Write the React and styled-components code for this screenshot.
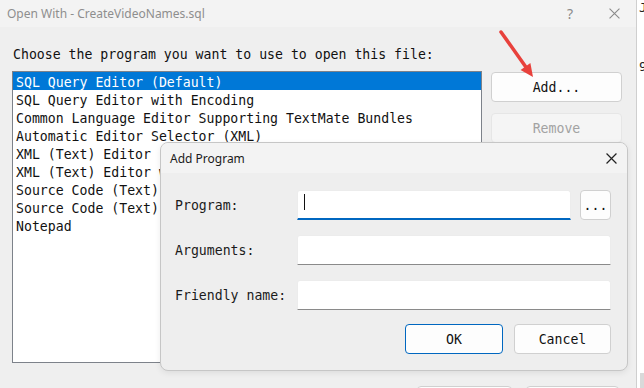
import React from "react";
import styled, { createGlobalStyle } from "styled-components";

const mono = `"DejaVu Sans Mono", "Liberation Mono", monospace`;
const ui = `"Noto Sans", "Open Sans", "Liberation Sans", sans-serif`;

const GlobalStyle = createGlobalStyle`
  html, body {
    margin: 0;
    padding: 0;
    background: #efefef;
  }
  * {
    box-sizing: border-box;
  }
`;

const Screen = styled.div`
  position: relative;
  width: 644px;
  height: 388px;
  overflow: hidden;
  display: flex;
  background: #efefef;
`;

const Window = styled.div`
  width: 637px;
  flex-shrink: 0;
  display: flex;
  flex-direction: column;
  background: #efefef;
  border-right: 1px solid #cfcfcf;
`;

const TitleBar = styled.div`
  height: 27px;
  flex-shrink: 0;
  display: flex;
  align-items: center;
  padding-left: 7px;
  background: #f3f3f3;
  font-family: ${ui};
  font-size: 12px;
  color: #8e8e8e;
`;

const TitleText = styled.div`
  flex: 1;
`;

const TitleButton = styled.div`
  width: 44px;
  height: 27px;
  display: flex;
  align-items: center;
  justify-content: center;
  font-size: 14px;
  color: #8a8a8a;
`;

const Body = styled.div`
  padding: 20px 0 0 12px;
  font-family: ${mono};
  font-size: 13.2px;
  color: #111;
`;

const Heading = styled.div`
  line-height: 16px;
  height: 16px;
  padding-left: 1px;
`;

const Row = styled.div`
  display: flex;
  gap: 9px;
  margin-top: 8px;
`;

const ListBox = styled.div`
  width: 470px;
  height: 292px;
  background: #fff;
  border: 1px solid #7d828a;
  display: flex;
  flex-direction: column;
  overflow: hidden;
`;

const ListItem = styled.div`
  height: 18px;
  line-height: 16px;
  padding: 3px 0 0 3px;
  white-space: nowrap;
  background: ${(p) => (p.$selected ? "#0078d7" : "transparent")};
  color: ${(p) => (p.$selected ? "#fff" : "#111")};
`;

const ButtonColumn = styled.div`
  width: 131px;
  display: flex;
  flex-direction: column;
  gap: 11px;
  padding-top: 1px;
`;

const Button = styled.div`
  height: 30px;
  width: ${(p) => p.$width || "auto"};
  display: flex;
  align-items: center;
  justify-content: center;
  background: ${(p) => (p.$disabled ? "#f5f5f5" : "#fdfdfd")};
  border: 1px solid
    ${(p) => (p.$primary ? "#0067c0" : p.$disabled ? "#e6e6e6" : "#d0d0d0")};
  border-radius: 4px;
  color: ${(p) => (p.$disabled ? "#a2a2a2" : "#111")};
  font-family: ${mono};
  font-size: 13.2px;
`;

const FooterRow = styled.div`
  display: flex;
  justify-content: flex-end;
  gap: 14px;
  margin-top: 23px;
  padding-right: 17px;
`;

const BackWindow = styled.div`
  flex: 1;
  display: flex;
  flex-direction: column;
  background: #fff;
  padding-left: 2px;
  font-family: ${mono};
  font-size: 13px;
  color: #222;
  overflow: hidden;
  white-space: nowrap;
`;

const BackLine = styled.div`
  line-height: 14px;
  margin-top: ${(p) => p.$top || 0}px;
`;

const BackScroll = styled.div`
  margin-top: auto;
  height: 15px;
  margin-left: 1px;
  background: #d9d9d9;
`;

const Arrow = styled.svg`
  position: absolute;
  left: 495px;
  top: 28px;
`;

const Dialog = styled.div`
  position: absolute;
  left: 160px;
  top: 142px;
  width: 468px;
  height: 229px;
  display: flex;
  flex-direction: column;
  background: #eeeeee;
  border: 1px solid #c6c6c6;
  border-radius: 8px;
  overflow: hidden;
  box-shadow: 0 2px 6px rgba(0, 0, 0, 0.08);
`;

const DialogTitle = styled.div`
  height: 30px;
  display: flex;
  align-items: center;
  justify-content: space-between;
  padding: 0 10px 0 9px;
  background: #f3f3f3;
  font-family: ${ui};
  font-size: 12px;
  color: #1b1b1b;
`;

const Form = styled.div`
  display: grid;
  grid-template-columns: 122px 1fr;
  row-gap: 15px;
  padding: 17px 16px 0 14px;
  font-family: ${mono};
  font-size: 13.2px;
  color: #1b1b1b;
`;

const Label = styled.div`
  display: flex;
  align-items: center;
  height: 30px;
`;

const FieldRow = styled.div`
  display: flex;
  gap: 9px;
`;

const Input = styled.div`
  position: relative;
  height: 30px;
  width: ${(p) => p.$width || "100%"};
  background: #fff;
  border: 1px solid #ececec;
  border-bottom: ${(p) => (p.$focused ? "2px solid #0067c0" : "1px solid #8a8a8a")};
  border-radius: 3px 3px 0 0;
`;

const Caret = styled.span`
  position: absolute;
  left: 6px;
  top: 3px;
  width: 1px;
  height: 16px;
  background: #111;
`;

const DialogButtons = styled.div`
  display: flex;
  justify-content: flex-end;
  gap: 11px;
  padding: 14px 16px 0 0;
`;

const CloseIcon = ({ size, color, width }) => (
  <svg width={size} height={size} viewBox="0 0 10 10">
    <path d="M0.5 0.5 L9.5 9.5 M9.5 0.5 L0.5 9.5" stroke={color} strokeWidth={width} fill="none" />
  </svg>
);

const programs = [
  "SQL Query Editor (Default)",
  "SQL Query Editor with Encoding",
  "Common Language Editor Supporting TextMate Bundles",
  "Automatic Editor Selector (XML)",
  "XML (Text) Editor",
  "XML (Text) Editor with Encoding",
  "Source Code (Text) Editor",
  "Source Code (Text) Editor with Encoding",
  "Notepad",
];

const fields = [
  { label: "Program:", focused: true },
  { label: "Arguments:" },
  { label: "Friendly name:" },
];

const App = () => {
  return (
    <>
      <GlobalStyle />
      <Screen>
        <Window>
          <TitleBar>
            <TitleText>Open With - CreateVideoNames.sql</TitleText>
            <TitleButton>?</TitleButton>
            <TitleButton>
              <CloseIcon size={11} color="#8a8a8a" width={1} />
            </TitleButton>
          </TitleBar>
          <Body>
            <Heading>Choose the program you want to use to open this file:</Heading>
            <Row>
              <ListBox>
                {programs.map((name, i) => (
                  <ListItem key={name} $selected={i === 0}>
                    {name}
                  </ListItem>
                ))}
              </ListBox>
              <ButtonColumn>
                <Button>Add...</Button>
                <Button $disabled>Remove</Button>
              </ButtonColumn>
            </Row>
            <FooterRow>
              <Button $width="95px">OK</Button>
              <Button $width="93px">Cancel</Button>
            </FooterRow>
          </Body>
        </Window>
        <BackWindow>
          <BackLine $top={1}>J</BackLine>
          <BackLine $top={45}>9</BackLine>
          <BackScroll />
        </BackWindow>

        <Arrow width="48" height="56" viewBox="0 0 48 56">
          <line x1="6" y1="4" x2="30.5" y2="38.4" stroke="#e8413c" strokeWidth="3.5" strokeLinecap="round" />
          <polygon points="38,49 25.6,41.9 35.4,34.9" fill="#e8413c" />
        </Arrow>

        <Dialog>
          <DialogTitle>
            <span>Add Program</span>
            <CloseIcon size={11} color="#222" width={1.1} />
          </DialogTitle>
          <Form>
            {fields.map((f) => (
              <React.Fragment key={f.label}>
                <Label>{f.label}</Label>
                {f.focused ? (
                  <FieldRow>
                    <Input $focused $width="274px">
                      <Caret />
                    </Input>
                    <Button $width="31px">...</Button>
                  </FieldRow>
                ) : (
                  <Input />
                )}
              </React.Fragment>
            ))}
          </Form>
          <DialogButtons>
            <Button $primary $width="98px">OK</Button>
            <Button $width="97px">Cancel</Button>
          </DialogButtons>
        </Dialog>
      </Screen>
    </>
  );
};

export default App;
